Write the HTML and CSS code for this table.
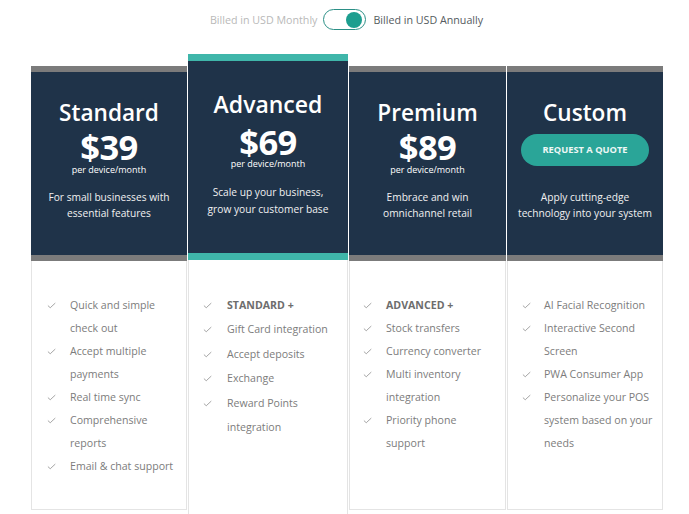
FILE: index.html
```html
<!DOCTYPE html>
<html lang="en">
<head>
<meta charset="utf-8">
<title>Pricing</title>
<link rel="stylesheet" href="styles.css">
</head>
<body>
<div class="page">
  <div class="billing">
    <span class="opt off">Billed in USD Monthly</span>
    <span class="switch"><span class="knob"></span></span>
    <span class="opt on">Billed in USD Annually</span>
  </div>

  <div class="plans">
    <div class="plan standard">
      <div class="head">
        <h2 class="title">Standard</h2>
        <div class="price">$39</div>
        <div class="unit">per device/month</div>
        <p class="desc">For small businesses with<br>essential features</p>
      </div>
      <ul class="features">
        <li><svg class="tick" viewBox="0 0 10 7"><path d="M1 3.6 L3.6 6 L9.2 0.8"/></svg><span>Quick and simple<br>check out</span></li>
        <li><svg class="tick" viewBox="0 0 10 7"><path d="M1 3.6 L3.6 6 L9.2 0.8"/></svg><span>Accept multiple<br>payments</span></li>
        <li><svg class="tick" viewBox="0 0 10 7"><path d="M1 3.6 L3.6 6 L9.2 0.8"/></svg><span>Real time sync</span></li>
        <li><svg class="tick" viewBox="0 0 10 7"><path d="M1 3.6 L3.6 6 L9.2 0.8"/></svg><span>Comprehensive<br>reports</span></li>
        <li><svg class="tick" viewBox="0 0 10 7"><path d="M1 3.6 L3.6 6 L9.2 0.8"/></svg><span>Email &amp; chat support</span></li>
      </ul>
    </div>

    <div class="plan advanced">
      <div class="head">
        <h2 class="title">Advanced</h2>
        <div class="price">$69</div>
        <div class="unit">per device/month</div>
        <p class="desc">Scale up your business,<br>grow your customer base</p>
      </div>
      <ul class="features">
        <li><svg class="tick" viewBox="0 0 10 7"><path d="M1 3.6 L3.6 6 L9.2 0.8"/></svg><span class="strong">STANDARD +</span></li>
        <li><svg class="tick" viewBox="0 0 10 7"><path d="M1 3.6 L3.6 6 L9.2 0.8"/></svg><span>Gift Card integration</span></li>
        <li><svg class="tick" viewBox="0 0 10 7"><path d="M1 3.6 L3.6 6 L9.2 0.8"/></svg><span>Accept deposits</span></li>
        <li><svg class="tick" viewBox="0 0 10 7"><path d="M1 3.6 L3.6 6 L9.2 0.8"/></svg><span>Exchange</span></li>
        <li><svg class="tick" viewBox="0 0 10 7"><path d="M1 3.6 L3.6 6 L9.2 0.8"/></svg><span>Reward Points<br>integration</span></li>
      </ul>
    </div>

    <div class="plan premium">
      <div class="head">
        <h2 class="title">Premium</h2>
        <div class="price">$89</div>
        <div class="unit">per device/month</div>
        <p class="desc">Embrace and win<br>omnichannel retail</p>
      </div>
      <ul class="features">
        <li><svg class="tick" viewBox="0 0 10 7"><path d="M1 3.6 L3.6 6 L9.2 0.8"/></svg><span class="strong">ADVANCED +</span></li>
        <li><svg class="tick" viewBox="0 0 10 7"><path d="M1 3.6 L3.6 6 L9.2 0.8"/></svg><span>Stock transfers</span></li>
        <li><svg class="tick" viewBox="0 0 10 7"><path d="M1 3.6 L3.6 6 L9.2 0.8"/></svg><span>Currency converter</span></li>
        <li><svg class="tick" viewBox="0 0 10 7"><path d="M1 3.6 L3.6 6 L9.2 0.8"/></svg><span>Multi inventory<br>integration</span></li>
        <li><svg class="tick" viewBox="0 0 10 7"><path d="M1 3.6 L3.6 6 L9.2 0.8"/></svg><span>Priority phone<br>support</span></li>
      </ul>
    </div>

    <div class="plan custom">
      <div class="head">
        <h2 class="title">Custom</h2>
        <a class="quote" href="#">REQUEST A QUOTE</a>
        <p class="desc">Apply cutting-edge<br>technology into your system</p>
      </div>
      <ul class="features">
        <li><svg class="tick" viewBox="0 0 10 7"><path d="M1 3.6 L3.6 6 L9.2 0.8"/></svg><span>AI Facial Recognition</span></li>
        <li><svg class="tick" viewBox="0 0 10 7"><path d="M1 3.6 L3.6 6 L9.2 0.8"/></svg><span>Interactive Second<br>Screen</span></li>
        <li><svg class="tick" viewBox="0 0 10 7"><path d="M1 3.6 L3.6 6 L9.2 0.8"/></svg><span>PWA Consumer App</span></li>
        <li><svg class="tick" viewBox="0 0 10 7"><path d="M1 3.6 L3.6 6 L9.2 0.8"/></svg><span>Personalize your POS<br>system based on your<br>needs</span></li>
      </ul>
    </div>
  </div>
</div>
</body>
</html>
```

FILE: styles.css
```css
* { box-sizing: border-box; }

html, body {
  margin: 0;
  padding: 0;
  background: #ffffff;
}

body {
  font-family: "Open Sans", "Noto Sans", sans-serif;
  width: 689px;
  height: 514px;
  overflow: hidden;
}

.page {
  padding-top: 9px;
}

/* billing toggle */
.billing {
  display: flex;
  align-items: center;
  justify-content: center;
  height: 21px;
  padding-left: 4px;
  font-size: 10.7px;
}

.opt.off { color: #b9b9b9; }
.opt.on { color: #555b60; }

.switch {
  position: relative;
  width: 43px;
  height: 21px;
  margin: 0 7px 0 6px;
  border: 1.5px solid #2b8f86;
  border-radius: 11px;
  background: #ffffff;
}

.knob {
  position: absolute;
  right: 3px;
  top: 1.5px;
  width: 16px;
  height: 16px;
  border-radius: 50%;
  background: #1d9e8f;
}

/* plans */
.plans {
  display: flex;
  align-items: flex-start;
  gap: 1px;
  margin-top: 24px;
  padding-left: 31px;
}

.plan {
  display: flex;
  flex-direction: column;
  width: 156px;
  margin-top: 12px;
}

.plan.advanced { width: 160px; margin-top: 0; }
.plan.premium { width: 157px; }

.head {
  background: #1f3349;
  border-top: 6px solid #7b7b7b;
  border-bottom: 6px solid #7b7b7b;
  color: #ffffff;
  text-align: center;
  padding: 25px 0 34px;
}

.advanced .head {
  border-top: 7px solid #3fb6aa;
  border-bottom: 7px solid #3fb6aa;
  padding: 27px 0 35px;
}

.title {
  margin: 0;
  font-size: 22.6px;
  line-height: 31px;
  font-weight: 600;
}

.advanced .title { font-size: 23px; line-height: 32px; }

.price {
  margin-top: 2px;
  font-size: 34.5px;
  line-height: 34px;
  font-weight: 700;
  letter-spacing: -0.5px;
}

.advanced .price { margin-top: 5px; }

.unit {
  font-size: 9px;
  line-height: 12px;
}

.advanced .unit { margin-top: -1px; }

.desc {
  margin: 13px 0 0;
  font-size: 10.2px;
  line-height: 16px;
  color: #f1f1f1;
}

.advanced .desc { margin-top: 14px; line-height: 17px; }

.quote {
  display: block;
  width: 128px;
  height: 32px;
  margin: 6px auto 0;
  border-radius: 16px;
  background: #2aa598;
  color: #eef7f5;
  font-size: 9.3px;
  font-weight: 700;
  line-height: 32px;
  text-decoration: none;
}

.custom .desc { margin-top: 23px; }

/* features */
.features {
  list-style: none;
  margin: 0;
  padding: 33px 0 0;
  height: 249px;
  border: 1px solid #e4e4e4;
  border-top: 0;
  font-size: 10.6px;
  line-height: 23px;
  color: #7c7c7c;
}

.advanced .features {
  height: 270px;
  line-height: 24.4px;
  border-bottom: 0;
}

.features li {
  display: flex;
  align-items: flex-start;
  padding-left: 14px;
}

.tick {
  flex: none;
  width: 9px;
  height: 7px;
  margin-top: 8px;
  margin-right: 14px;
  fill: none;
  stroke: #8f8f8f;
  stroke-width: 0.9;
}

.standard .features li { padding-left: 15px; }
.premium .features li { padding-left: 13px; }
.custom .features li { padding-left: 14px; }
.custom .tick { margin-right: 13px; }
.advanced .tick { margin-right: 15px; margin-top: 9px; }

.strong {
  font-weight: 700;
  color: #6d6d6d;
}
```
